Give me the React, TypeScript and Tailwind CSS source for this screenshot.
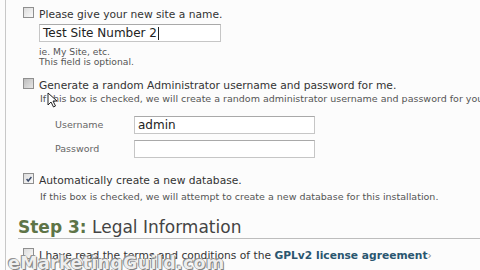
import React from 'react';

const font = { fontFamily: '"DejaVu Sans", Verdana, sans-serif' };

function Box({ state }: { state: 'empty' | 'grey' | 'checked' }) {
  return (
    <span
      className={`inline-flex h-[11px] w-[11px] shrink-0 items-center justify-center border border-[#8f8f8f] ${
        state === 'grey' ? 'bg-gradient-to-br from-[#bdbdbd] to-[#e6e6e6]' : 'bg-gradient-to-br from-[#dcdcdc] to-[#fafafa]'
      }`}
    >
      {state === 'checked' && (
        <svg viewBox="0 0 10 10" className="h-[8px] w-[8px]">
          <path d="M2 5 L4 7.5 L8 2.5" fill="none" stroke="#3a4a6a" strokeWidth="1.8" />
        </svg>
      )}
    </span>
  );
}

function Field({ value }: { value?: string }) {
  return (
    <div className="flex h-[18px] w-[181px] items-center border border-[#c6c6c6] border-t-[#a9a9a9] bg-white px-[3px] text-[12px] text-[#222]">
      {value}
    </div>
  );
}

export default function App() {
  return (
    <div className="relative h-[270px] w-[480px] overflow-hidden bg-[#fcfcfc] text-[#333]" style={font}>
      <div className="ml-[5px] h-full border-l border-[#c8c8c8] pl-[17px] pt-[7px]">
        {/* site name */}
        <div className="flex items-start gap-[5px] text-[10.7px] leading-[16px]">
          <Box state="empty" />
          <span>Please give your new site a name.</span>
        </div>
        <div className="ml-[16px] mt-[1px]">
          <div className="flex h-[18px] w-[182px] items-center border border-[#c6c6c6] border-t-[#a9a9a9] bg-white px-[3px] text-[12px] text-[#222]">
            Test Site Number 2<span className="ml-px h-[13px] w-px bg-[#222]" />
          </div>
          <div className="mt-[5px] text-[9.2px] leading-[10px] text-[#555]">
            <div>ie. My Site, etc.</div>
            <div>This field is optional.</div>
          </div>
        </div>

        {/* random admin */}
        <div className="mt-[11px] flex items-start gap-[5px] text-[10.7px] leading-[16px]">
          <Box state="grey" />
          <span className="whitespace-nowrap">Generate a random Administrator username and password for me.</span>
        </div>
        <div className="-mt-[1px] ml-[17px] whitespace-nowrap text-[9.5px] leading-[12px] text-[#555]">
          If this box is checked, we will create a random administrator username and password for you
        </div>
        <div className="ml-[32px] mt-[11px] grid grid-cols-[79px_auto] items-center gap-y-[6px] text-[9.5px] text-[#666]">
          <span>Username</span>
          <Field value="admin" />
          <span>Password</span>
          <Field />
        </div>

        {/* database */}
        <div className="mt-[15px] flex items-start gap-[5px] text-[10.7px] leading-[16px]">
          <Box state="checked" />
          <span>Automatically create a new database.</span>
        </div>
        <div className="ml-[17px] mt-[2px] whitespace-nowrap text-[9.5px] leading-[12px] text-[#555]">
          If this box is checked, we will attempt to create a new database for this installation.
        </div>

        {/* step 3 */}
        <div className="-ml-[5px] mt-[13px] border-b border-[#bdbdbd] text-[17px] leading-[22px] text-[#444]">
          <span className="font-bold text-[#5e7447]">Step 3:</span> Legal Information
        </div>
        <div className="mt-[9px] flex items-start gap-[5px] text-[10.7px] leading-[16px]">
          <Box state="empty" />
          <span className="whitespace-nowrap">
            I have read the terms and conditions of the{' '}
            <span className="font-bold text-[#2a5670]">GPLv2 license agreement</span>
            <span className="text-[#888]">›</span>
          </span>
        </div>
      </div>

      {/* mouse cursor */}
      <svg className="absolute left-[47px] top-[92px] h-[16px] w-[11px]" viewBox="0 0 11 16">
        <path d="M1 1 L1 13 L4 10 L6.5 15 L8.5 14 L6 9 L10 9 Z" fill="#fff" stroke="#222" strokeWidth="1" strokeLinejoin="round" />
      </svg>

      {/* watermark */}
      <div
        className="absolute -bottom-[6px] left-[8px] text-[17.5px] font-bold tracking-[0.3px] text-[#eeeeee] [text-shadow:0_0_1px_#666,1px_1px_0_#888,-1px_-1px_0_#999]"
        style={{ fontFamily: '"DejaVu Sans", sans-serif' }}
      >
        eMarketingGuild.com
      </div>
    </div>
  );
}
